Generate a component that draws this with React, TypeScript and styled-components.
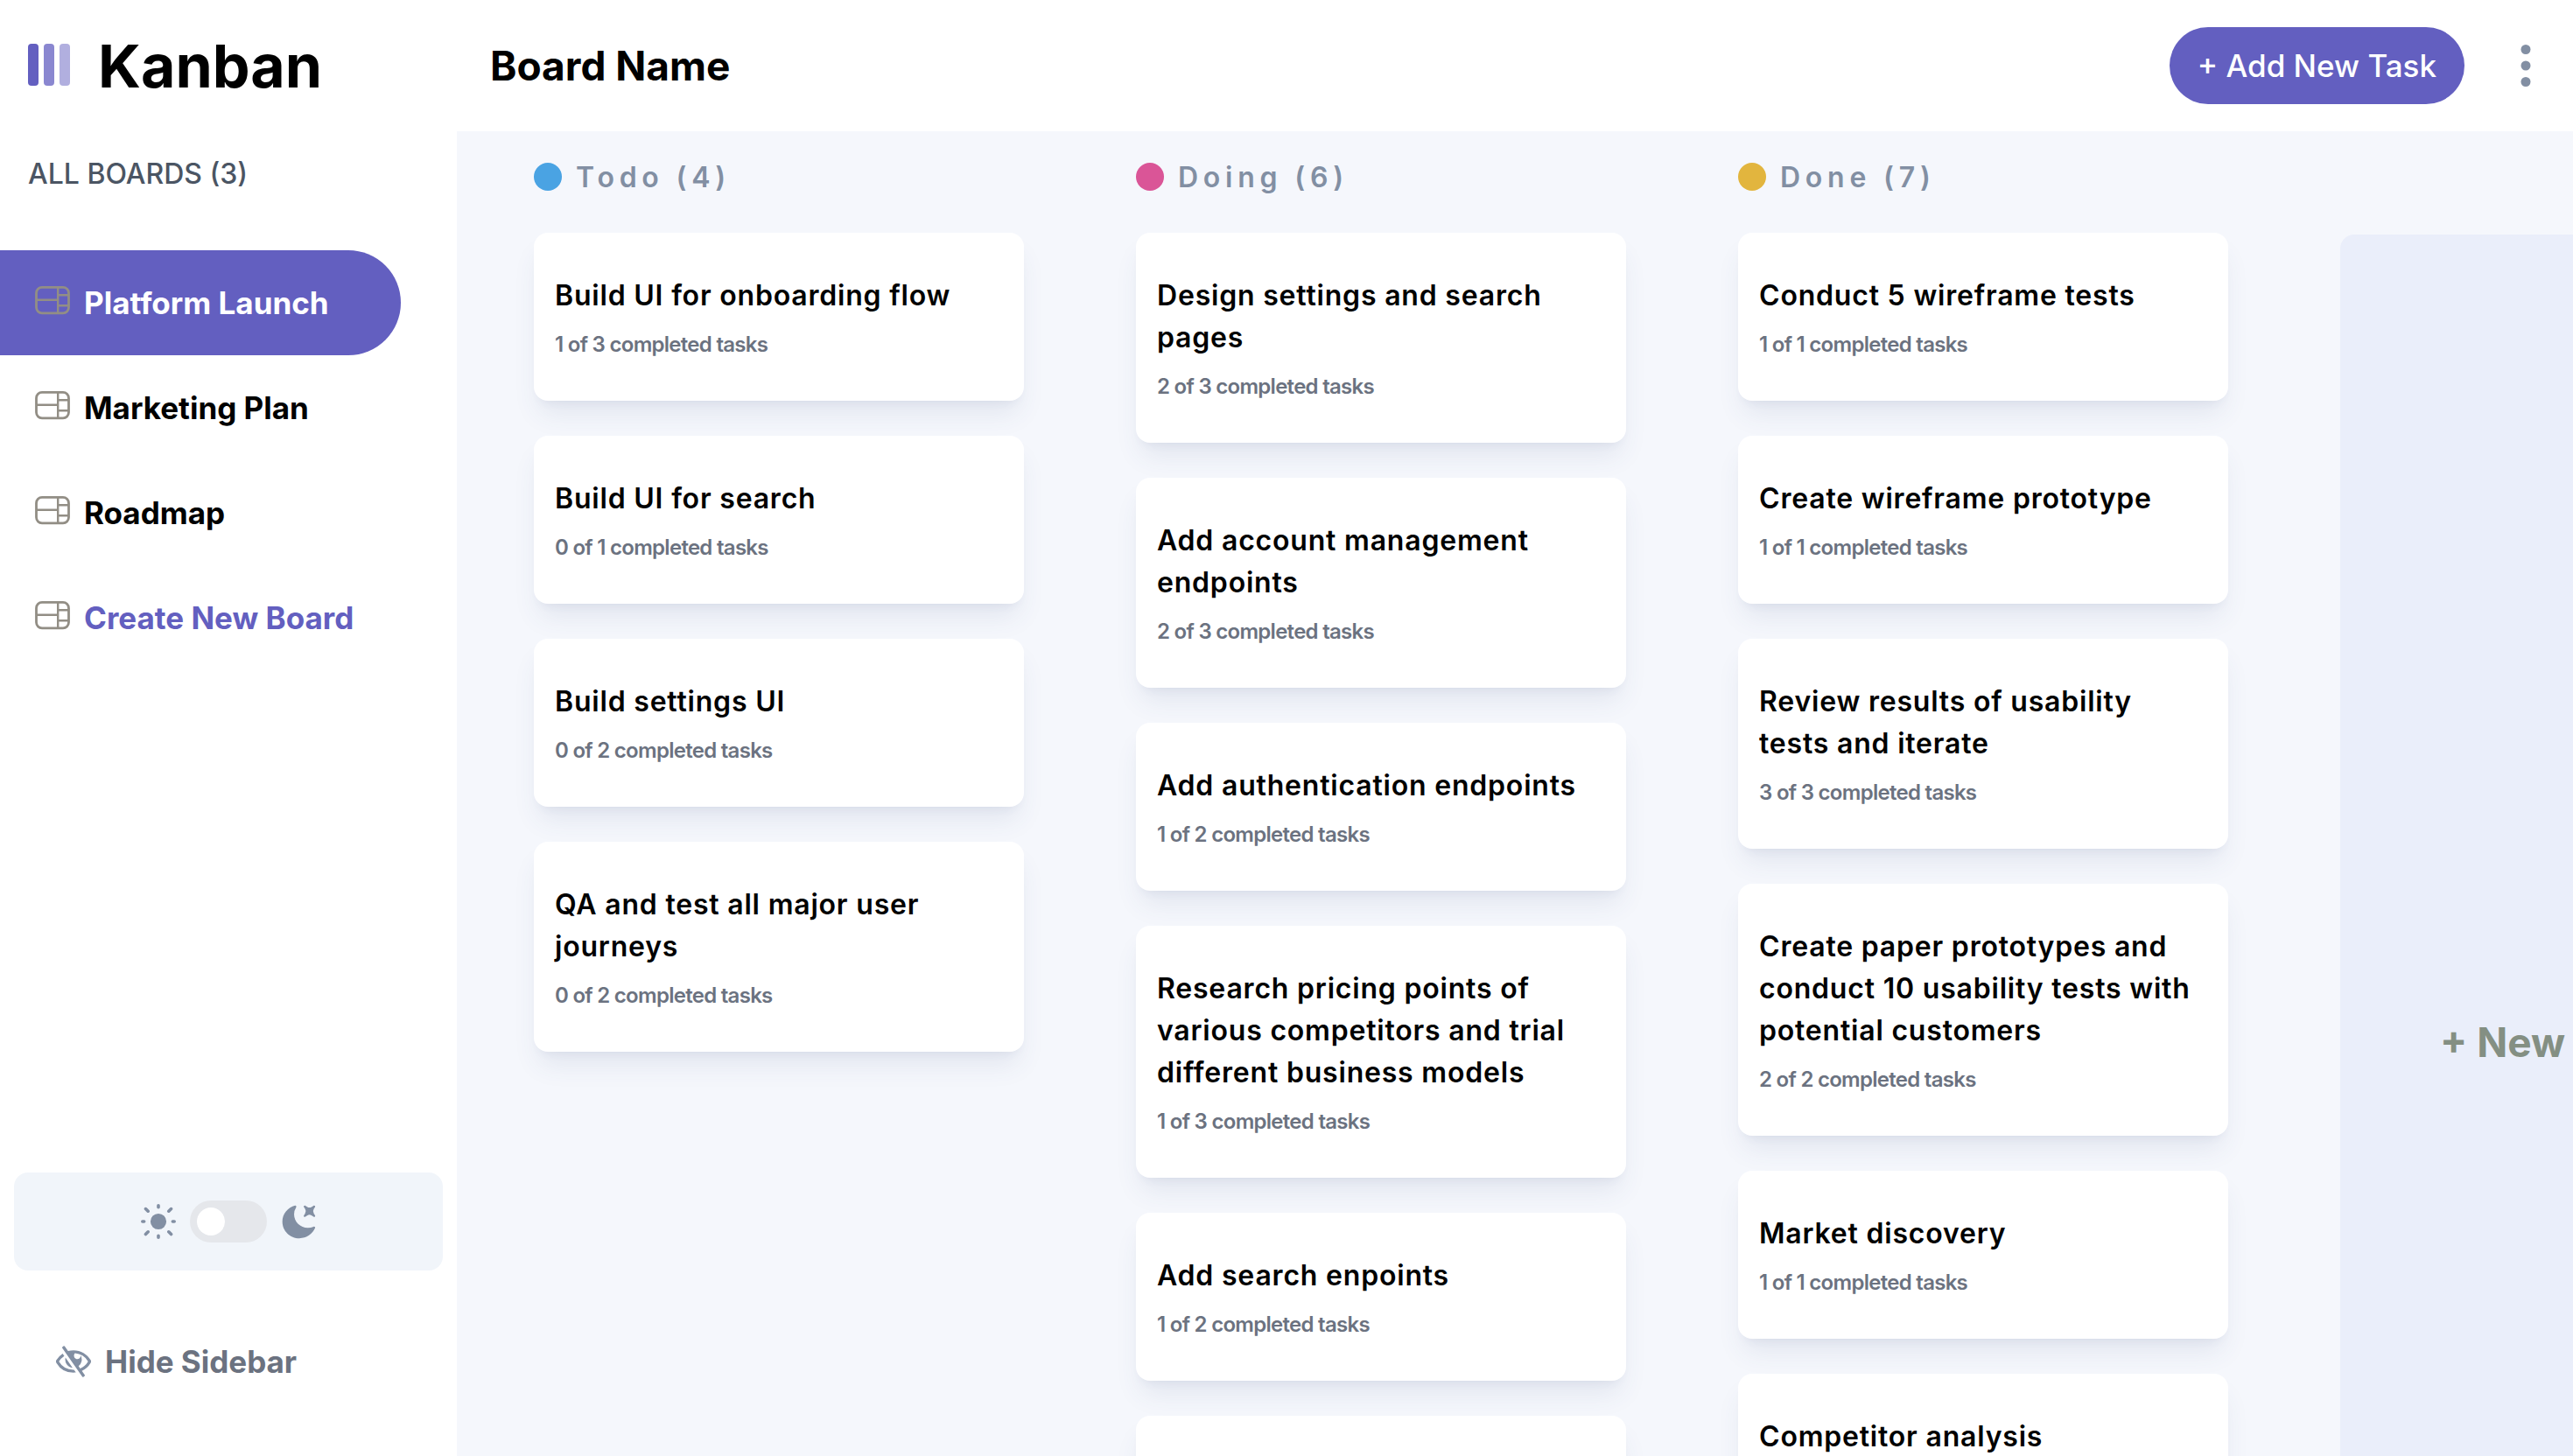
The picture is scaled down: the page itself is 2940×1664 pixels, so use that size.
import React from "react";
import styled, { createGlobalStyle } from "styled-components";

const GlobalStyle = createGlobalStyle`
  *, *::before, *::after { box-sizing: border-box; }
  body {
    margin: 0;
    background: #f5f7fc;
    color: #000;
    font-family: Inter, "Liberation Sans", sans-serif;
  }
  h1, h2, h3, p, ul { margin: 0; padding: 0; }
  ul { list-style: none; }
  button { font: inherit; border: 0; background: none; cursor: pointer; padding: 0; }
`;

const Page = styled.div`
  display: flex;
  height: 100vh;
`;

const Sidebar = styled.aside`
  display: flex;
  flex-direction: column;
  flex: none;
  width: 522px;
  background: #fff;
`;

const Brand = styled.div`
  display: flex;
  align-items: center;
  gap: 30px;
  height: 150px;
  padding-left: 32px;
`;

const BrandName = styled.h1`
  font-size: 68px;
  line-height: 80px;
  font-weight: 700;
`;

const SidebarHeading = styled.h2`
  padding-left: 32px;
  font-size: 32px;
  line-height: 98px;
  font-weight: 500;
  color: #4b5563;
`;

const BoardList = styled.ul`
  margin-top: 38px;
`;

const BoardLink = styled.a<{ $active?: boolean; $accent?: boolean }>`
  display: flex;
  align-items: center;
  gap: 16px;
  width: 458px;
  height: 120px;
  padding-left: 40px;
  border-radius: 0 60px 60px 0;
  font-size: 35px;
  font-weight: 700;
  text-decoration: none;
  background: ${(p) => (p.$active ? "#635fc0" : "transparent")};
  color: ${(p) => (p.$active ? "#fff" : p.$accent ? "#635fc0" : "#000")};
`;

const SidebarFooter = styled.div`
  display: flex;
  flex-direction: column;
  gap: 72px;
  margin-top: auto;
  padding: 0 16px 76px;
`;

const ThemeBox = styled.div`
  display: flex;
  align-items: center;
  justify-content: center;
  gap: 16px;
  height: 112px;
  border-radius: 16px;
  background: #f1f5fa;
  color: #828fa3;
`;

const Switch = styled.input`
  appearance: none;
  display: flex;
  align-items: center;
  width: 88px;
  height: 48px;
  margin: 0;
  padding: 0 8px;
  border-radius: 24px;
  background: #e5e7eb;
  cursor: pointer;
  &::before {
    content: "";
    width: 32px;
    height: 32px;
    border-radius: 50%;
    background: #fff;
  }
  &:checked { justify-content: flex-end; background: #635fc0; }
`;

const HideButton = styled.button`
  display: flex;
  align-items: center;
  gap: 16px;
  height: 64px;
  padding-left: 48px;
  font-size: 35px;
  font-weight: 700;
  color: #6b7280;
  svg { color: #828fa3; }
`;

const Main = styled.main`
  display: flex;
  flex-direction: column;
  flex: 1;
  min-width: 0;
`;

const Header = styled.header`
  display: flex;
  align-items: center;
  flex: none;
  height: 150px;
  padding: 0 44px 0 38px;
  background: #fff;
`;

const BoardTitle = styled.h2`
  flex: 1;
  font-size: 46px;
  line-height: 56px;
  font-weight: 700;
`;

const AddButton = styled.button`
  height: 88px;
  padding: 0 32px;
  border-radius: 44px;
  background: #635fc0;
  color: #fff;
  font-size: 35px;
  font-weight: 500;
`;

const MenuButton = styled.button`
  display: flex;
  margin-left: 60px;
`;

const BoardViewport = styled.div`
  flex: 1;
  min-height: 0;
  overflow: auto;
  scrollbar-width: none;
`;

const Board = styled.div`
  display: flex;
  align-items: stretch;
  width: max-content;
  padding: 32px 88px 0;
  gap: 128px;
`;

const Column = styled.section`
  flex: none;
  width: 560px;
  padding-bottom: 120px;
`;

const ColumnTitle = styled.h3`
  display: flex;
  align-items: center;
  gap: 16px;
  height: 40px;
  font-size: 32px;
  font-weight: 600;
  letter-spacing: 0.18em;
  color: #828fa3;
`;

const Dot = styled.span<{ $color: string }>`
  width: 32px;
  height: 32px;
  border-radius: 50%;
  background: ${(p) => p.$color};
`;

const CardList = styled.ul`
  display: flex;
  flex-direction: column;
  gap: 40px;
  margin-top: 44px;
`;

const Card = styled.li`
  padding: 48px 24px;
  border-radius: 16px;
  background: #fff;
  box-shadow: 0 20px 30px -6px rgba(54, 78, 126, 0.1), 0 8px 12px -8px rgba(54, 78, 126, 0.1);
`;

const CardTitle = styled.p`
  font-size: 32px;
  line-height: 48px;
  font-weight: 600;
  letter-spacing: 0.025em;
`;

const CardMeta = styled.p`
  padding-top: 16px;
  font-size: 24px;
  line-height: 32px;
  font-weight: 600;
  letter-spacing: -0.03em;
  color: #6b7280;
`;

const NewColumn = styled.button`
  flex: none;
  width: 556px;
  margin-top: 86px;
  border-radius: 16px;
  background: #eaeefa;
  color: #848f83;
  font-size: 46px;
  font-weight: 700;
`;

const Logo = () => (
  <svg width="50" height="50" viewBox="0 0 50 50" aria-hidden="true">
    <g fill="#635fc0">
      <rect width="12" height="48" rx="4" />
      <rect width="12" height="48" x="18" rx="4" opacity=".75" />
      <rect width="12" height="48" x="36" rx="4" opacity=".5" />
    </g>
  </svg>
);

const BoardIcon = () => (
  <svg width="40" height="40" viewBox="0 0 40 40" fill="none" stroke="#928e85" strokeWidth="2.4" aria-hidden="true">
    <rect x="1.5" y="2.4" width="37" height="29.4" rx="6.5" strokeWidth="2.8" />
    <path d="M26.2 2.25v29.5M1.25 16.7H26M26 11.2h12.75M26 23.2h12.75" />
  </svg>
);

const SunIcon = () => (
  <svg width="40" height="40" viewBox="0 0 18.34 18.34" fill="currentColor" aria-hidden="true">
    <path d="M9.167 15.833a.833.833 0 0 1 .833.834v.833a.833.833 0 0 1-1.667 0v-.833a.833.833 0 0 1 .834-.834ZM3.75 13.75a.833.833 0 0 1 .59 1.422l-1.25 1.25a.833.833 0 0 1-1.18-1.178l1.25-1.25a.833.833 0 0 1 .59-.244Zm10.833 0c.221 0 .433.088.59.244l1.25 1.25a.833.833 0 0 1-1.179 1.178l-1.25-1.25a.833.833 0 0 1 .59-1.422ZM9.167 5a4.167 4.167 0 1 1 0 8.334 4.167 4.167 0 0 1 0-8.334Zm-7.5 3.333a.833.833 0 0 1 0 1.667H.833a.833.833 0 1 1 0-1.667h.834Zm15.833 0a.833.833 0 0 1 0 1.667h-.833a.833.833 0 0 1 0-1.667h.833Zm-1.667-6.666a.833.833 0 0 1 .59 1.422l-1.25 1.25a.833.833 0 1 1-1.179-1.178l1.25-1.25a.833.833 0 0 1 .59-.244Zm-13.333 0c.221 0 .433.088.59.244l1.25 1.25a.833.833 0 0 1-1.18 1.178L1.91 3.09a.833.833 0 0 1 .59-1.422ZM9.167 0A.833.833 0 0 1 10 .833v.834a.833.833 0 1 1-1.667 0V.833A.833.833 0 0 1 9.167 0Z" />
  </svg>
);

const MoonIcon = () => (
  <svg width="40" height="40" viewBox="0 0 16 16" fill="currentColor" aria-hidden="true">
    <path d="M6.474.682c.434-.11.718.406.481.78A6.067 6.067 0 0 0 6.01 4.72c0 3.418 2.827 6.187 6.314 6.187.89.002 1.77-.182 2.584-.54.408-.18.894.165.724.57-1.16 2.775-3.944 4.73-7.194 4.73-4.292 0-7.771-3.41-7.771-7.615 0-3.541 2.466-6.518 5.807-7.37Zm8.433.07c.442-.294.969.232.674.674l-.525.787a1.943 1.943 0 0 0 0 2.157l.525.788c.295.441-.232.968-.674.673l-.787-.525a1.943 1.943 0 0 0-2.157 0l-.786.525c-.442.295-.97-.232-.675-.673l.525-.788a1.943 1.943 0 0 0 0-2.157l-.525-.787c-.295-.442.232-.968.674-.673l.787.525a1.943 1.943 0 0 0 2.157 0Z" />
  </svg>
);

const HideIcon = () => (
  <svg width="40" height="36" viewBox="0 0 18 16" fill="currentColor" aria-hidden="true">
    <path d="M8.522 11.223a4.252 4.252 0 0 1-3.654-5.22l3.654 5.22ZM9 12.25A8.685 8.685 0 0 1 1.5 8a8.612 8.612 0 0 1 2.76-2.864l-.86-1.23A10.112 10.112 0 0 0 .208 7.238a1.5 1.5 0 0 0 0 1.524A10.187 10.187 0 0 0 9 13.75c.414 0 .828-.025 1.239-.074l-1-1.43A8.88 8.88 0 0 1 9 12.25Zm8.792-3.488a10.14 10.14 0 0 1-4.486 4.046l1.504 2.148a.375.375 0 0 1-.092.523l-.648.453a.375.375 0 0 1-.523-.092L3.19 1.044A.375.375 0 0 1 3.282.52L3.93.068a.375.375 0 0 1 .523.092l1.735 2.479A10.308 10.308 0 0 1 9 2.25c3.746 0 7.031 2 8.792 4.988a1.5 1.5 0 0 1 0 1.524ZM16.5 8a8.674 8.674 0 0 0-6.755-4.219A1.75 1.75 0 1 0 12.75 5v-.001a4.25 4.25 0 0 1-1.154 5.366l.834 1.192A8.641 8.641 0 0 0 16.5 8Z" />
  </svg>
);

const DotsIcon = () => (
  <svg width="20" height="48" viewBox="0 0 20 48" fill="#828fa3" aria-hidden="true">
    <circle cx="10" cy="5.5" r="5.5" />
    <circle cx="10" cy="24" r="5.5" />
    <circle cx="10" cy="42.5" r="5.5" />
  </svg>
);

type Task = { title: string; done: number; total: number };
type ColumnData = { name: string; color: string; tasks: Task[] };

const boards = ["Platform Launch", "Marketing Plan", "Roadmap"];

const columns: ColumnData[] = [
  {
    name: "Todo",
    color: "#4aa3e3",
    tasks: [
      { title: "Build UI for onboarding flow", done: 1, total: 3 },
      { title: "Build UI for search", done: 0, total: 1 },
      { title: "Build settings UI", done: 0, total: 2 },
      { title: "QA and test all major user journeys", done: 0, total: 2 },
    ],
  },
  {
    name: "Doing",
    color: "#da5597",
    tasks: [
      { title: "Design settings and search pages", done: 2, total: 3 },
      { title: "Add account management endpoints", done: 2, total: 3 },
      { title: "Add authentication endpoints", done: 1, total: 2 },
      { title: "Research pricing points of various competitors and trial different business models", done: 1, total: 3 },
      { title: "Add search enpoints", done: 1, total: 2 },
      { title: "Design onboarding flow", done: 1, total: 3 },
    ],
  },
  {
    name: "Done",
    color: "#e2b53e",
    tasks: [
      { title: "Conduct 5 wireframe tests", done: 1, total: 1 },
      { title: "Create wireframe prototype", done: 1, total: 1 },
      { title: "Review results of usability tests and iterate", done: 3, total: 3 },
      { title: "Create paper prototypes and conduct 10 usability tests with potential customers", done: 2, total: 2 },
      { title: "Market discovery", done: 1, total: 1 },
      { title: "Competitor analysis", done: 2, total: 2 },
      { title: "Research the market", done: 2, total: 2 },
    ],
  },
];

export default function App() {
  return (
    <>
      <GlobalStyle />
      <Page>
        <Sidebar>
          <Brand>
            <Logo />
            <BrandName>Kanban</BrandName>
          </Brand>
          <SidebarHeading>ALL BOARDS ({boards.length})</SidebarHeading>
          <BoardList>
            {boards.map((name, i) => (
              <li key={name}>
                <BoardLink href="#" $active={i === 0}>
                  <BoardIcon />
                  {name}
                </BoardLink>
              </li>
            ))}
            <li>
              <BoardLink href="#" $accent>
                <BoardIcon />
                Create New Board
              </BoardLink>
            </li>
          </BoardList>
          <SidebarFooter>
            <ThemeBox>
              <SunIcon />
              <Switch type="checkbox" role="switch" aria-label="Dark theme" />
              <MoonIcon />
            </ThemeBox>
            <HideButton type="button">
              <HideIcon />
              Hide Sidebar
            </HideButton>
          </SidebarFooter>
        </Sidebar>
        <Main>
          <Header>
            <BoardTitle>Board Name</BoardTitle>
            <AddButton type="button">+ Add New Task</AddButton>
            <MenuButton type="button" aria-label="Board menu">
              <DotsIcon />
            </MenuButton>
          </Header>
          <BoardViewport>
            <Board>
              {columns.map((column) => (
                <Column key={column.name}>
                  <ColumnTitle>
                    <Dot $color={column.color} />
                    {column.name} ({column.tasks.length})
                  </ColumnTitle>
                  <CardList>
                    {column.tasks.map((task) => (
                      <Card key={task.title}>
                        <CardTitle>{task.title}</CardTitle>
                        <CardMeta>
                          {task.done} of {task.total} completed tasks
                        </CardMeta>
                      </Card>
                    ))}
                  </CardList>
                </Column>
              ))}
              <NewColumn type="button">+ New Column</NewColumn>
            </Board>
          </BoardViewport>
        </Main>
      </Page>
    </>
  );
}
